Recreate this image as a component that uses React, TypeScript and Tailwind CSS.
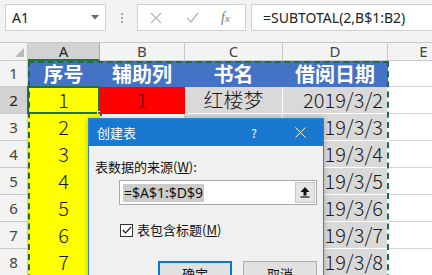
import React from "react";

type Cell = { t?: string; bg?: string; align?: string; color?: string; bold?: boolean; sel?: boolean };

const colLetters = ["A", "B", "C", "D", "E"];

const rows: Cell[][] = [
    [
        { t: "序号", bg: "bg-[#4472c4] border-[#4472c4]", color: "text-white", bold: true },
        { t: "辅助列", bg: "bg-[#4472c4] border-[#4472c4]", color: "text-white", bold: true },
        { t: "书名", bg: "bg-[#4472c4] border-[#4472c4]", color: "text-white", bold: true },
        { t: "借阅日期", bg: "bg-[#4472c4] border-[#4472c4]", color: "text-white", bold: true },
        {},
    ],
    [
        { t: "1", bg: "bg-[#ffff00] border-[#ffff00]", sel: true },
        { t: "1", bg: "bg-[#ff0000] border-[#ff0000]", color: "text-[#5a0000]" },
        { t: "红楼梦", bg: "bg-[#d9d9d9] border-white" },
        { t: "2019/3/2", bg: "bg-[#d9d9d9] border-white", align: "justify-end pr-[4px]" },
        {},
    ],
    ...[2, 3, 4, 5, 6, 7].map((n) => [
        { t: String(n), bg: "bg-[#ffff00] border-[#ffff00]" },
        {},
        { bg: "bg-[#d9d9d9] border-white" },
        { t: `2019/3/${n + 1}`, bg: "bg-[#d9d9d9] border-white", align: "justify-end pr-[4px]" },
        {},
    ]),
];

const App = () => {
    return (
        <div className="w-[432px] h-[275px] overflow-hidden relative bg-white font-['Noto_Sans_CJK_SC',sans-serif]">
            {/* formula bar */}
            <div className="h-[42px] bg-[#f3f3f3] flex items-start pt-[4px] pl-[5px]">
                <div className="w-[101px] h-[27px] bg-white border border-[#d0d0d0] flex items-center pl-[6px] pr-[6px] text-[14px] text-[#222] font-['Noto_Sans',sans-serif]">
                    <span>A1</span>
                    <svg className="ml-auto" width="8" height="5" viewBox="0 0 8 5"><path d="M0 0h8L4 4.5z" fill="#666" /></svg>
                </div>
                <div className="w-[31px] h-[27px] flex flex-col items-center justify-center gap-[2px]">
                    <span className="w-[2px] h-[2px] bg-[#a8a8a8]" />
                    <span className="w-[2px] h-[2px] bg-[#a8a8a8]" />
                    <span className="w-[2px] h-[2px] bg-[#a8a8a8]" />
                </div>
                <div className="w-[109px] h-[27px] bg-white border border-[#d0d0d0] flex items-center">
                    <svg className="ml-[12px]" width="12" height="12" viewBox="0 0 12 12"><path d="M1 1l10 10M11 1L1 11" stroke="#b4b4b4" strokeWidth="1.3" /></svg>
                    <svg className="ml-[24px]" width="13" height="11" viewBox="0 0 13 11"><path d="M1 6l4 4L12 1" stroke="#b4b4b4" strokeWidth="1.3" fill="none" /></svg>
                    <span className="ml-[22px] font-['Liberation_Serif',serif] italic text-[#777] text-[14px]">f<span className="text-[11px]">x</span></span>
                </div>
                <div className="ml-[5px] flex-1 h-[27px] bg-white border border-[#d0d0d0] border-r-0 flex items-center pl-[11px] text-[14px] text-[#222] font-['Noto_Sans',sans-serif]">
                    =SUBTOTAL(2,B$1:B2)
                </div>
            </div>

            {/* sheet */}
            <div className="relative">
                <div className="grid grid-cols-[28px_72px_85px_98px_105px_72px] grid-rows-[19px_26px_27px_27px_27px_27px_27px_27px_27px] font-light">
                    <div className="bg-[#f3f3f3] border-r border-b border-[#c8c8c8] border-t flex items-end justify-end pr-[3px] pb-[3px]">
                        <svg width="9" height="9" viewBox="0 0 9 9"><path d="M9 0v9H0z" fill="#b9b9b9" /></svg>
                    </div>
                    {colLetters.map((c, i) => (
                        <div
                            key={c}
                            className={`border-t border-[#c8c8c8] flex items-center justify-center text-[15px] font-['Noto_Sans',sans-serif] font-normal ${
                                i === 0
                                    ? "bg-[#d2d2d2] text-[#222] border-b-2 border-b-[#217346] border-r border-r-[#ababab]"
                                    : "bg-[#f3f3f3] text-[#444] border-b border-r border-[#c8c8c8]"
                            }`}
                        >
                            {c}
                        </div>
                    ))}
                    {rows.map((r, ri) => (
                        <React.Fragment key={ri}>
                            <div
                                className={`border-r border-b border-[#c8c8c8] flex items-center justify-center text-[15px] font-['Noto_Sans',sans-serif] font-normal ${
                                    ri === 1 ? "bg-[#d2d2d2] text-[#222]" : "bg-[#f3f3f3] text-[#444]"
                                }`}
                            >
                                {ri + 1}
                            </div>
                            {r.map((c, ci) => (
                                <div
                                    key={ci}
                                    className={`relative border-r border-b flex items-center text-[20px] leading-none ${c.bg ?? "border-[#d4d4d4]"} ${
                                        c.align ?? "justify-center"
                                    } ${c.color ?? "text-[#1a1a1a]"} ${c.bold ? "font-bold" : ""}`}
                                >
                                    {c.t}
                                    {c.sel && (
                                        <>
                                            <div className="absolute -left-[1px] -top-[1px] -right-[1px] -bottom-[1px] border-2 border-[#217346]" />
                                            <div className="absolute -right-[4px] -bottom-[4px] w-[6px] h-[6px] bg-[#217346] border border-white" />
                                        </>
                                    )}
                                </div>
                            ))}
                        </React.Fragment>
                    ))}
                </div>
                {/* copy range marquee */}
                <div className="absolute left-[28px] top-[19px] w-[361px] h-[260px] border-2 border-dashed border-[#1f6b45] pointer-events-none" />
            </div>

            {/* create table dialog */}
            <div className="absolute left-[88px] top-[118px] w-[236px] h-[170px] border border-[#2b86d6] bg-[#f0f0f0] shadow-[0_0_6px_rgba(0,0,0,0.25)] flex flex-col text-[13px] text-[#111]">
                <div className="h-[27px] bg-[#1979d0] flex items-center text-white">
                    <span className="pl-[8px]">创建表</span>
                    <span className="ml-auto w-[46px] text-center text-[12px]">?</span>
                    <span className="w-[46px] flex justify-center">
                        <svg width="11" height="11" viewBox="0 0 11 11"><path d="M0.5 0.5l10 10M10.5 0.5l-10 10" stroke="white" strokeWidth="1" /></svg>
                    </span>
                </div>
                <div className="pl-[6px] mt-[12px] leading-[18px]">
                    表数据的来源(<span className="underline">W</span>):
                </div>
                <div className="ml-[30px] mt-[4px] w-[198px] h-[25px] bg-white border border-[#a8a8a8] flex items-center pl-[3px] pr-[1px]">
                    <span className="bg-[#cccccc] text-[14px] leading-[18px] px-[1px] font-['Noto_Sans',sans-serif]">=$A$1:$D$9</span>
                    <span className="ml-auto w-[20px] h-[21px] bg-[#e5e5e5] border border-[#c8c8c8] flex items-center justify-center">
                        <svg width="10" height="11" viewBox="0 0 10 11"><path d="M5 0L9.5 5H6.5V8.5H3.5V5H0.5z" fill="#111" /><path d="M0.5 10H9.5" stroke="#111" strokeWidth="1.2" /></svg>
                    </span>
                </div>
                <div className="ml-[31px] mt-[16px] flex items-center gap-[4px] leading-[18px]">
                    <span className="w-[13px] h-[13px] bg-white border border-[#333] flex items-center justify-center">
                        <svg width="10" height="8" viewBox="0 0 10 8"><path d="M0.8 4l2.7 2.8L9.2 0.8" stroke="#111" strokeWidth="1.2" fill="none" /></svg>
                    </span>
                    <span>
                        表包含标题(<span className="underline">M</span>)
                    </span>
                </div>
                <div className="ml-[69px] mt-[22px] flex gap-[11px]">
                    <div className="w-[74px] h-[26px] bg-[#e1e1e1] border-2 border-[#0078d7] flex items-center justify-center">确定</div>
                    <div className="w-[74px] h-[26px] bg-[#e1e1e1] border border-[#adadad] flex items-center justify-center">取消</div>
                </div>
            </div>
        </div>
    );
};

export default App;
